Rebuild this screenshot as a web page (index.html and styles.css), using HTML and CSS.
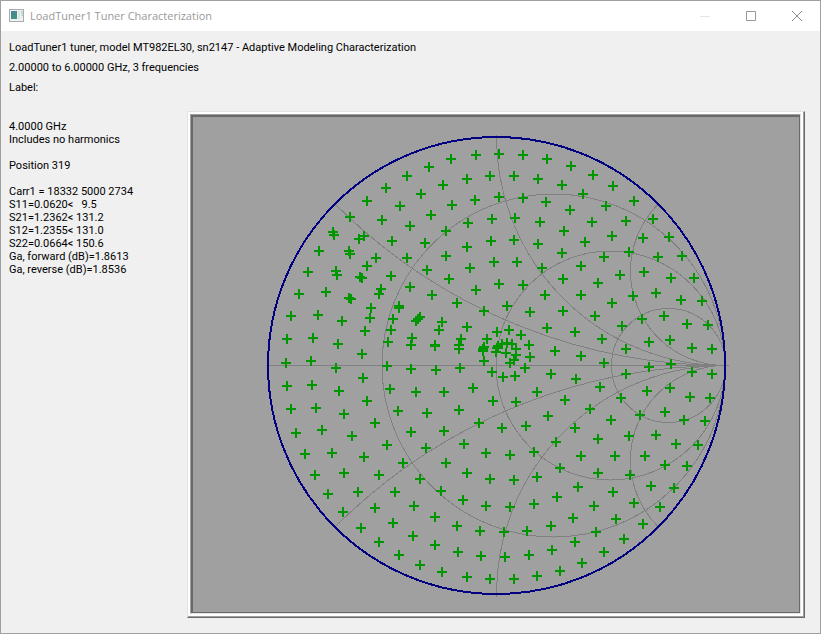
FILE: index.html
```html
<!DOCTYPE html>
<html lang="en">
<head>
<meta charset="utf-8">
<title>LoadTuner1 Tuner Characterization</title>
<link rel="stylesheet" href="styles.css">
</head>
<body>
<div class="window">
  <header class="titlebar">
    <svg class="app-icon" width="16" height="16" viewBox="0 0 16 16" aria-hidden="true">
      <defs>
        <linearGradient id="screen" x1="0" y1="0" x2="1" y2="1">
          <stop offset="0" stop-color="#4f7fa8"/>
          <stop offset="1" stop-color="#3f9a6c"/>
        </linearGradient>
      </defs>
      <rect x="0.5" y="1.5" width="14" height="12" fill="#eef0f2" stroke="#a9adb1"/>
      <rect x="2" y="3" width="6" height="8" fill="url(#screen)"/>
      <rect x="9" y="3" width="2" height="8" fill="#dfe3e6"/>
      <rect x="12" y="3" width="2" height="5" fill="#c5ddcf"/>
    </svg>
    <h1>LoadTuner1 Tuner Characterization</h1>
    <div class="controls">
      <button type="button" class="control" aria-label="Minimize" disabled>
        <svg width="10" height="10" viewBox="0 0 10 10"><path d="M0 5.5H10" stroke="#e5e5e5"/></svg>
      </button>
      <button type="button" class="control" aria-label="Maximize">
        <svg width="10" height="10" viewBox="0 0 10 10"><path d="M.5 .5H9.5V9.5H.5Z" fill="none" stroke="#999"/></svg>
      </button>
      <button type="button" class="control" aria-label="Close">
        <svg width="10" height="10" viewBox="0 0 10 10"><path d="M0 0L10 10M10 0L0 10" stroke="#8c8c8c"/></svg>
      </button>
    </div>
  </header>
  <main class="content">
    <section class="summary">
      <p>LoadTuner1 tuner, model MT982EL30, sn2147 - Adaptive Modeling Characterization</p>
      <p>2.00000 to 6.00000 GHz, 3 frequencies</p>
      <p>Label:</p>
    </section>
    <div class="body">
      <aside class="readout">
        <p>4.0000 GHz<br>Includes no harmonics</p>
        <p>Position 319</p>
        <p>Carr1 = 18332 5000 2734<br>S11=0.0620&lt;&nbsp;&nbsp; 9.5<br>S21=1.2362&lt; 131.2<br>S12=1.2355&lt; 131.0<br>S22=0.0664&lt; 150.6<br>Ga, forward (dB)=1.8613<br>Ga, reverse (dB)=1.8536</p>
      </aside>
      <div class="frame">
        <div class="plot">
          <svg class="chart" viewBox="193 117 606 495" role="img" aria-label="Smith chart of tuner positions">
            <defs>
              <clipPath id="unit"><circle cx="496.5" cy="365.5" r="229"/></clipPath>
              <marker id="plus" markerUnits="userSpaceOnUse" markerWidth="12" markerHeight="12" refX="5" refY="5" viewBox="0 0 12 12">
                <path d="M0 5H10M5 0V10" class="plus"/>
              </marker>
            </defs>
            <g class="grid" clip-path="url(#unit)">
              <circle cx="553.5" cy="365.5" r="171.5"/>
              <circle cx="610.5" cy="365.5" r="114.5"/>
              <circle cx="668.5" cy="365.5" r="57"/>
              <circle cx="725" cy="-186" r="551.5"/>
              <circle cx="725" cy="917" r="551.5"/>
              <circle cx="725" cy="137" r="228.5"/>
              <circle cx="725" cy="594" r="228.5"/>
              <circle cx="725" cy="271" r="94.5"/>
              <circle cx="725" cy="460" r="94.5"/>
            </g>
            <path class="grid" d="M266 365.5H729M496.5 135V140M496.5 592V597"/>
            <polyline class="points" points="
407,176 386,188 367,201 400,206 382,220 350,217 410,226 392,241 333,232 334,235 364,236 359,239 319,251 349,251 350,254 376,258 407,258 367,266 308,272 336,271 337,275 360,277 362,278 391,276 381,289 379,294 410,287 299,294 326,292 421,194
349,298 351,299 371,308 370,318 291,316 318,315 342,321 365,331 399,306 399,308 393,319 391,330 388,342 287,339 313,338 338,344 362,354 286,363 311,361 336,368 387,366 412,338 411,345 411,369 287,386 312,385 339,391 363,378 390,389 416,392 367,401 291,409 316,408 344,414 398,411 375,423 296,433 322,430 352,436 411,432 387,445 416,321 418,319 420,317
429,167 451,159 476,155 499,154 523,155 547,159 571,166 443,185 467,179 490,176 514,176 538,179 562,185 452,205 475,200 499,197 523,198 546,202 583,194 431,215 446,231 468,223 492,219 515,218 540,222 570,210 425,243 564,231 467,247 491,241 514,240 538,244 446,256 562,253 427,270 470,268 494,262 517,262 542,268 581,266 449,279 563,279 499,284 523,285 476,290
593,175 613,186 634,201 606,206 653,219 592,222 626,221 612,236 643,238 669,237 585,242 629,252 604,257 658,257 682,256 620,275 644,272 671,278 694,278 598,283 656,293
432,295 457,303 484,311 507,306 530,312 545,295 581,295 563,311 442,322 439,330 467,327 435,345 435,346 461,339 459,345 459,349 497,332 509,330 521,335 547,328 575,332 487,339 484,347 483,349 483,351 484,361 529,345 530,357 555,351 581,356 525,368 515,376 503,377 492,372 436,370 460,368 473,388 444,392 493,401 516,402 537,392 551,374 576,379 565,400 548,416 526,426 502,428 479,423 459,410 427,413 444,431 464,444 556,442 575,428
496,352 497,348 498,346 502,344 507,343 512,344 516,349 506,353 516,355 514,360 510,363 426,448 486,453 534,452
612,303 633,296 681,300 702,301 595,316 622,326 642,319 664,316 687,324 708,325 602,339 626,349 649,342 670,340 692,348 712,349 604,363 626,374 649,367 671,364 692,372 712,374 600,387 621,398 647,391 670,388 690,397 710,398 590,409 611,420 640,415 665,412 684,420 705,421 598,439 629,436 656,435 676,444 698,445
305,454 332,453 364,457 403,463 315,475 344,473 379,475 420,479 328,494 358,492 395,492 343,512 375,508 414,506 361,528 393,523 379,542 413,536 399,555 420,565
510,455 581,456 446,463 467,473 490,479 514,480 537,477 560,468 578,487 441,491 463,500 486,506 510,507 534,504 557,497 435,517 457,526 480,531 504,532 527,531 551,526 573,518 435,545 458,552 481,556 505,557 529,555 552,550 575,542 442,572 467,577 490,579 514,579 537,576 560,571 582,563
615,456 645,456 665,465 687,466 598,473 630,475 613,492 651,486 674,488 594,506 634,503 660,507 616,519 596,532 643,524 624,539 604,552"/>
            <circle class="rim" cx="496.5" cy="365.5" r="228.5"/>
          </svg>
        </div>
      </div>
    </div>
  </main>
</div>
</body>
</html>
```
FILE: styles.css
```css
* {
  box-sizing: border-box;
}

body {
  margin: 0;
}

h1,
p {
  margin: 0;
  font-weight: normal;
}

.window {
  display: flex;
  flex-direction: column;
  height: 100vh;
  border: 1px solid #a0a0a0;
  background: #f0f0f0;
  color: #000;
  font: 11px/13px Roboto, Tahoma, sans-serif;
}

.titlebar {
  display: flex;
  align-items: center;
  height: 30px;
  padding-left: 8px;
  background: #fff;
}

.app-icon {
  flex: none;
  margin-right: 5px;
}

.titlebar h1 {
  flex: 1;
  color: #999;
  font: 11px/16px "Open Sans", "Noto Sans", sans-serif;
}

.controls {
  display: flex;
}

.control {
  display: grid;
  place-items: center;
  width: 46px;
  height: 30px;
  padding: 0;
  border: 0;
  background: none;
}

.content {
  display: flex;
  flex: 1;
  flex-direction: column;
  min-height: 0;
  padding: 10px 15px 15px 8px;
}

.summary {
  display: grid;
  gap: 7px;
  padding-bottom: 17px;
}

.body {
  display: grid;
  flex: 1;
  grid-template-columns: 178px minmax(0, 1fr);
  min-height: 0;
}

.readout {
  display: grid;
  align-content: start;
  gap: 13px;
  padding-top: 9px;
}

.frame {
  display: grid;
  min-height: 0;
  padding: 2px 3px 3px 2px;
  border: 1px solid;
  border-color: #e3e3e3 #696969 #696969 #e3e3e3;
  background: #fff;
  box-shadow: inset -1px -1px #a0a0a0;
}

.plot {
  min-height: 0;
  border: 1px solid;
  border-color: #a0a0a0 #e3e3e3 #e3e3e3 #a0a0a0;
  background: #a0a0a0;
}

.chart {
  display: block;
  width: 100%;
  height: 100%;
  border: solid #696969;
  border-width: 2px 1px 1px 2px;
}

.grid {
  fill: none;
  stroke: #808080;
  shape-rendering: crispEdges;
}

.rim {
  fill: none;
  stroke: #000080;
  stroke-width: 2;
  shape-rendering: crispEdges;
}

.points {
  fill: none;
  stroke: none;
  marker: url(#plus);
}

.plus {
  stroke: #009600;
  stroke-width: 2;
  shape-rendering: crispEdges;
}
```
